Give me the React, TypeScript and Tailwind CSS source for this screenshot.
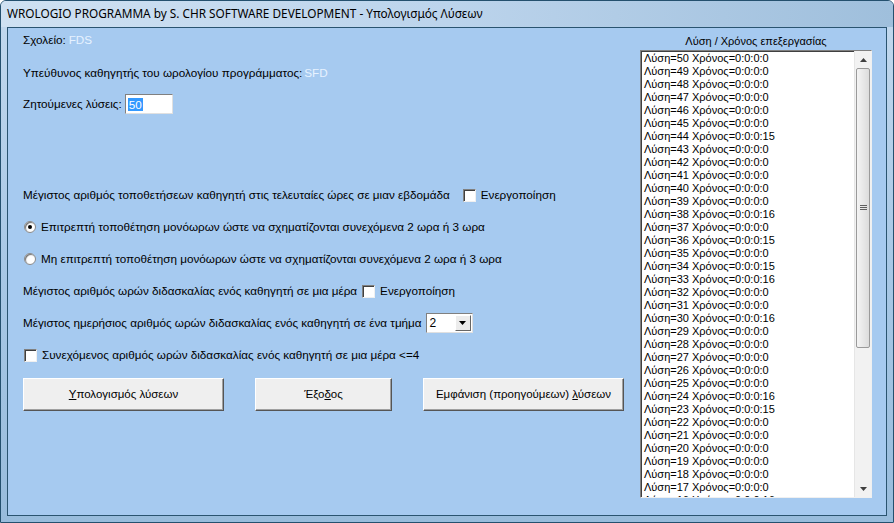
import React from 'react';

const times: Record<number, string> = {
    44: '15', 38: '16', 36: '15', 34: '15', 33: '16', 30: '16', 24: '16', 23: '15', 16: '16',
};

const solutions = Array.from({ length: 50 }, (_, i) => 50 - i);

const CheckBox = () => (
    <span className="inline-block w-[13px] h-[13px] bg-white border border-t-[#808080] border-l-[#808080] border-b-[#f0f0f0] border-r-[#f0f0f0] shadow-[inset_1px_1px_0_#404040]" />
);

const Radio = ({ checked }: { checked?: boolean }) => (
    <span className="inline-flex items-center justify-center w-[12px] h-[12px] rounded-full bg-white border border-[#8a8a8a] shadow-[inset_1px_1px_1px_#707070]">
        {checked && <span className="w-[4px] h-[4px] rounded-full bg-black" />}
    </span>
);

const WinButton = ({ className, children }: { className: string; children: React.ReactNode }) => (
    <div className={`h-[33px] flex items-center justify-center bg-[#efefef] border border-t-white border-l-white border-b-[#555] border-r-[#555] shadow-[inset_-1px_-1px_0_#a0a0a0] ${className}`}>
        {children}
    </div>
);

export default function App() {
    return (
        <div className="w-[894px] h-[523px] flex flex-col bg-gradient-to-b from-[#c3d9ee] via-[#a8c8e6] to-[#98bcdc] border border-[#24506e] rounded-t-[6px] font-['Liberation_Sans',sans-serif] text-[11px] text-black overflow-hidden">
            {/* Title bar */}
            <div className="h-[26px] flex items-center pl-[6px] text-[11.8px] font-['Noto_Sans',sans-serif] text-black shrink-0 bg-gradient-to-r from-[#cfe1f2] via-[#bcd4ec] to-[#9fbfdc]">
                WROLOGIO PROGRAMMA by S. CHR SOFTWARE DEVELOPMENT - Υπολογισμός Λύσεων
            </div>

            {/* Client area */}
            <div className="flex-1 mx-[6px] mb-[6px] border border-[#2a5470] bg-[#a6caf0] flex">
                <div className="flex-1 pl-[15px] pt-[2px] flex flex-col text-[11.7px]">
                    <div className="h-[20px] flex items-center">
                        Σχολείο: <span className="ml-[3px] text-[#e6f2ff]">FDS</span>
                    </div>
                    <div className="h-[20px] mt-[13px] flex items-center">
                        Υπεύθυνος καθηγητής του ωρολογίου προγράμματος:
                        <span className="ml-[2px] text-[#e6f2ff]">SFD</span>
                    </div>
                    <div className="h-[20px] mt-[11px] flex items-center">
                        Ζητούμενες λύσεις:
                        <span className="ml-[3px] w-[48px] h-[20px] bg-white border border-t-[#808080] border-l-[#808080] border-b-[#e0e0e0] border-r-[#e0e0e0] flex items-center pl-[2px]">
                            <span className="bg-[#3399ff] text-white leading-[13px] px-[1px]">50</span>
                        </span>
                    </div>
                    <div className="h-[20px] mt-[71px] flex items-center">
                        Μέγιστος αριθμός τοποθετήσεων καθηγητή στις τελευταίες ώρες σε μιαν εβδομάδα
                        <span className="ml-[13px] mr-[5px] flex"><CheckBox /></span>
                        Ενεργοποίηση
                    </div>
                    <div className="h-[20px] mt-[12px] flex items-center">
                        <span className="ml-[1px] mr-[5px] flex"><Radio checked /></span>
                        Επιτρεπτή τοποθέτηση μονόωρων ώστε να σχηματίζονται συνεχόμενα 2 ωρα ή 3 ωρα
                    </div>
                    <div className="h-[20px] mt-[12px] flex items-center">
                        <span className="ml-[1px] mr-[5px] flex"><Radio /></span>
                        Μη επιτρεπτή τοποθέτηση μονόωρων ώστε να σχηματίζονται συνεχόμενα 2 ωρα ή 3 ωρα
                    </div>
                    <div className="h-[20px] mt-[12px] flex items-center">
                        Μέγιστος αριθμός ωρών διδασκαλίας ενός καθηγητή σε μια μέρα
                        <span className="ml-[5px] mr-[5px] flex"><CheckBox /></span>
                        Ενεργοποίηση
                    </div>
                    <div className="h-[20px] mt-[12px] flex items-center">
                        Μέγιστος ημερήσιος αριθμός ωρών διδασκαλίας ενός καθηγητή σε ένα τμήμα
                        <span className="ml-[4px] w-[47px] h-[20px] bg-white border border-t-[#808080] border-l-[#808080] border-b-[#e0e0e0] border-r-[#e0e0e0] flex items-center justify-between pl-[3px] pr-[1px]">
                            <span className="text-[12px]">2</span>
                            <span className="w-[16px] h-[16px] bg-[#ececec] border border-t-white border-l-white border-b-[#666] border-r-[#666] flex items-center justify-center">
                                <svg width="7" height="4" viewBox="0 0 7 4"><path d="M0 0h7L3.5 4z" fill="#000" /></svg>
                            </span>
                        </span>
                    </div>
                    <div className="h-[20px] mt-[12px] flex items-center">
                        <span className="ml-[1px] mr-[5px] flex"><CheckBox /></span>
                        Συνεχόμενος αριθμός ωρών διδασκαλίας ενός καθηγητή σε μια μέρα &lt;=4
                    </div>
                    <div className="mt-[13px] flex text-[11.5px]">
                        <WinButton className="w-[201px]"><span><u>Υ</u>πολογισμός λύσεων</span></WinButton>
                        <WinButton className="w-[137px] ml-[31px]"><span>Έξο<u>δ</u>ος</span></WinButton>
                        <WinButton className="w-[201px] ml-[31px]"><span>Εμφάνιση (προηγούμεων) <u>λ</u>ύσεων</span></WinButton>
                    </div>
                </div>

                {/* Solutions list */}
                <div className="w-[232px] mr-[14px] pt-[4px] flex flex-col">
                    <div className="h-[18px] flex items-center justify-center">Λύση / Χρόνος επεξεργασίας</div>
                    <div className="h-[448px] flex bg-white border border-t-[#808080] border-l-[#808080] border-b-[#f0f0f0] border-r-[#f0f0f0] shadow-[inset_1px_1px_0_#404040]">
                        <div className="flex-1 overflow-hidden pl-[3px] pt-[1px]">
                            {solutions.map((n) => (
                                <div key={n} className="h-[13px] leading-[13px] whitespace-nowrap">
                                    Λύση={n} Χρόνος=0:0:0:{times[n] ?? '0'}
                                </div>
                            ))}
                        </div>
                        <div className="w-[17px] flex flex-col bg-[#f2f2f2] border-l border-[#e6e6e6]">
                            <div className="h-[17px] flex items-center justify-center">
                                <svg width="7" height="4" viewBox="0 0 7 4"><path d="M3.5 0L7 4H0z" fill="#404040" /></svg>
                            </div>
                            <div className="mx-[1px] h-[280px] rounded-[2px] border border-[#9a9a9a] bg-gradient-to-r from-[#f4f4f4] to-[#dcdcdc] flex items-center justify-center">
                                <svg width="7" height="6" viewBox="0 0 7 6"><path d="M0 0.5h7M0 2.5h7M0 4.5h7" stroke="#606060" strokeWidth="1" /></svg>
                            </div>
                            <div className="flex-1" />
                            <div className="h-[17px] flex items-center justify-center">
                                <svg width="7" height="4" viewBox="0 0 7 4"><path d="M0 0h7L3.5 4z" fill="#404040" /></svg>
                            </div>
                        </div>
                    </div>
                </div>
            </div>
        </div>
    );
}
